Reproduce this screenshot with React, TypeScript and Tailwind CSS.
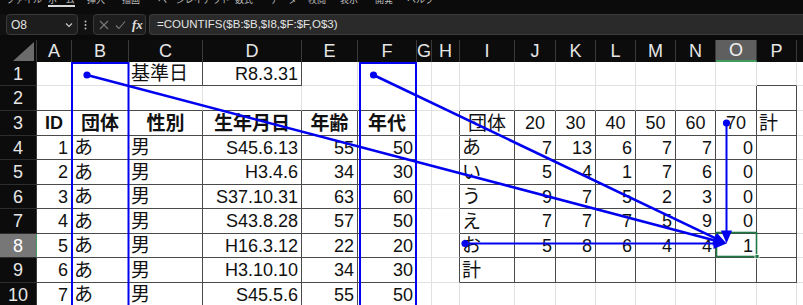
import React from "react";

type Align = "l" | "r" | "c";
type Cell = { t: string; a: Align; b?: boolean; j?: boolean };

const COLS = ["A","B","C","D","E","F","G","H","I","J","K","L","M","N","O","P","Q"];
const ROWS = [1,2,3,4,5,6,7,8,9,10];

const data: Record<string, Cell> = {};
const put = (ref: string, t: string, a: Align, b = false, j = false) => { data[ref] = { t, a, b, j }; };

put("C1", "基準日", "l", false, true);
put("D1", "R8.3.31", "r");
put("A3", "ID", "c", true);
put("B3", "団体", "c", true, true);
put("C3", "性別", "c", true, true);
put("D3", "生年月日", "c", true, true);
put("E3", "年齢", "c", true, true);
put("F3", "年代", "c", true, true);
put("I3", "団体", "c", false, true);
["20","30","40","50","60","70"].forEach((v, i) => put(COLS[9 + i] + "3", v, "c"));
put("P3", "計", "l", false, true);

const dates = ["S45.6.13","H3.4.6","S37.10.31","S43.8.28","H16.3.12","H3.10.10","S45.5.6"];
const ages = ["55","34","63","57","22","34","55"];
const decades = ["50","30","60","50","20","30","50"];
for (let i = 0; i < 7; i++) {
  const r = 4 + i;
  put("A" + r, String(i + 1), "r");
  put("B" + r, "あ", "l", false, true);
  put("C" + r, "男", "l", false, true);
  put("D" + r, dates[i], "r");
  put("E" + r, ages[i], "r");
  put("F" + r, decades[i], "r");
}
const groups = ["あ","い","う","え","お","計"];
groups.forEach((g, i) => put("I" + (4 + i), g, "l", false, true));
const counts = [
  ["7","13","6","7","7","0"],
  ["5","4","1","7","6","0"],
  ["9","7","5","2","3","0"],
  ["7","7","7","5","9","0"],
  ["5","8","6","4","4","1"],
];
counts.forEach((row, i) => row.forEach((v, j) => put(COLS[9 + j] + (4 + i), v, "r")));

function inTable(c: number, r: number): boolean {
  if (c >= 0 && c <= 5 && r >= 3 && r <= 11) return true;
  if ((c === 2 || c === 3) && r === 1) return true;
  if (c >= 8 && c <= 14 && r >= 3 && r <= 9) return true;
  if (c === 15 && r >= 2 && r <= 9) return true;
  return false;
}

const menu: [string, string][] = [
  ["ファイル", "w-[42px]"],
  ["ホーム", "w-[39px]"],
  ["挿入", "w-[35px]"],
  ["描画", "w-[36px]"],
  ["ページレイアウト", "w-[77px]"],
  ["数式", "w-[35px]"],
  ["データ", "w-[38px]"],
  ["校閲", "w-[32px]"],
  ["表示", "w-[35px]"],
  ["開発", "w-[32px]"],
  ["ヘルプ", "w-[40px]"],
];

function Arrows() {
  const tip = { x: 726.5, y: 243.5 };
  const arrows = [
    { x: 87, y: 75, w: 2.6 },
    { x: 373.5, y: 75, w: 2.6 },
    { x: 726.5, y: 123, w: 2 },
    { x: 465, y: 243.5, w: 2 },
  ];
  const blue = "#0000f0";
  return (
    <svg className="pointer-events-none absolute left-0 top-0" width={803} height={305} viewBox="0 0 803 305">
      <rect x={72} y={63} width={56.5} height={260} fill="none" stroke={blue} strokeWidth={2} />
      <rect x={360} y={63} width={56} height={260} fill="none" stroke={blue} strokeWidth={2} />
      <rect x={716.5} y={232.5} width={40} height={24} fill="none" stroke="#1f7a45" strokeWidth={1.6} />
      <rect x={755} y={254.5} width={4} height={4} fill="#1f7a45" stroke="#ffffff" strokeWidth={0.8} />
      {arrows.map((a, i) => {
        const dx = tip.x - a.x;
        const dy = tip.y - a.y;
        const len = Math.hypot(dx, dy);
        const ux = dx / len, uy = dy / len;
        const nx = -uy, ny = ux;
        const L = 13, W = 5.5;
        const bx = tip.x - L * ux, by = tip.y - L * uy;
        return (
          <g key={i}>
            <line x1={a.x} y1={a.y} x2={bx + ux} y2={by + uy} stroke={blue} strokeWidth={a.w} />
            <polygon
              points={`${tip.x},${tip.y} ${bx + W * nx},${by + W * ny} ${bx - W * nx},${by - W * ny}`}
              fill={blue}
            />
            <circle cx={a.x} cy={a.y} r={3.6} fill={blue} />
          </g>
        );
      })}
    </svg>
  );
}

export default function App() {
  return (
    <div className="relative h-[305px] w-[803px] overflow-hidden bg-[#0a0a0a] font-['Liberation_Sans','Noto_Sans_CJK_JP',sans-serif]">
      {/* menu bar (cut off at top) */}
      <div className="h-[14px] overflow-hidden bg-[#0b0b0b]">
        <div className="-mt-[5px] flex pl-[6px] font-['Noto_Sans_CJK_JP',sans-serif] text-[9px] leading-[9px] text-[#bdbdbd]">
          {menu.map(([m, w], i) => (
            <div key={m} className={`${w} shrink-0`}>
              <div className="inline-flex flex-col">
                <span className="whitespace-nowrap">{m}</span>
                {i === 1 ? <span className="mt-[1px] h-[2px] bg-[#d8d8d8]" /> : null}
              </div>
            </div>
          ))}
        </div>
      </div>
      {/* formula bar */}
      <div className="flex h-[21px] items-stretch bg-[#111111]">
        <div className="ml-[6px] flex w-[72px] items-center justify-between rounded-[4px] border border-[#3a3a3a] bg-[#1d1d1d] pl-[4px] pr-[4px]">
          <span className="text-[12px] text-[#e2e2e2]">O8</span>
          <svg width="8" height="6" viewBox="0 0 8 6"><path d="M1 1.5 L4 4.5 L7 1.5" fill="none" stroke="#c8c8c8" strokeWidth="1.2" /></svg>
        </div>
        <div className="flex w-[15px] items-center justify-center">
          <svg width="3" height="10" viewBox="0 0 3 10">
            <circle cx="1.5" cy="1.5" r="1" fill="#bdbdbd" />
            <circle cx="1.5" cy="5" r="1" fill="#bdbdbd" />
            <circle cx="1.5" cy="8.5" r="1" fill="#bdbdbd" />
          </svg>
        </div>
        <div className="flex w-[53px] items-center gap-[6px] rounded-[4px] border border-[#3a3a3a] bg-[#1d1d1d] pl-[5px]">
          <svg width="10" height="10" viewBox="0 0 10 10"><path d="M1 1 L9 9 M9 1 L1 9" stroke="#7a7a7a" strokeWidth="1.1" /></svg>
          <svg width="11" height="10" viewBox="0 0 11 10"><path d="M1 5.5 L4 8.5 L10 1.5" fill="none" stroke="#7a7a7a" strokeWidth="1.1" /></svg>
          <span className="font-['Liberation_Serif',serif] text-[13px] italic font-bold leading-none text-[#e0e0e0]">fx</span>
        </div>
        <div className="ml-[3px] flex flex-1 items-center rounded-l-[4px] border border-r-0 border-[#3c3c3c] bg-[#2a2a2a] pl-[7px]">
          <span className="text-[11.5px] text-[#e4e4e4]">=COUNTIFS($B:$B,$I8,$F:$F,O$3)</span>
        </div>
      </div>
      <div className="h-[5px] bg-[#0a0a0a]" />
      {/* sheet grid */}
      <div className="grid grid-cols-[37px_35px_57px_74px_99px_56px_59px_15px_28px_55px_41px_40px_40px_40px_40px_41px_40px_40px] grid-rows-[22px_24px_25px_25px_24px_25px_24px_25px_24px_25px_24px] text-[18px] leading-none">
        {/* corner */}
        <div className="flex items-end justify-end border-r border-r-[#3a3a3a] bg-[#0c0c0c] pb-[1px] pr-[2px]">
          <svg width="21" height="19" viewBox="0 0 21 19"><polygon points="21,0 21,19 0,19" fill="#6b6b6b" /></svg>
        </div>
        {COLS.map((c, ci) => (
          <div
            key={c}
            className={
              ci === 14
                ? "flex items-end justify-center border-r border-b-2 border-r-[#3a3a3a] border-b-[#3f9c5e] bg-[#5f5f5f] pb-[1px] text-[#f0f0f0]"
                : "flex items-end justify-center border-r border-r-[#3a3a3a] bg-[#0c0c0c] pb-[2px] text-[#e6e6e6]"
            }
          >
            {c}
          </div>
        ))}
        {ROWS.map((r) => (
          <React.Fragment key={r}>
            <div
              className={
                r === 8
                  ? "flex items-center justify-center border-b border-r border-b-[#2e2e2e] border-r-[#3f9c5e] bg-[#777777] text-[#ffffff]"
                  : "flex items-center justify-center border-b border-r border-b-[#2e2e2e] border-r-[#3a3a3a] bg-[#0c0c0c] text-[#e6e6e6]"
              }
            >
              {r}
            </div>
            {COLS.map((c, ci) => {
              const cell = data[c + r];
              const darkR = inTable(ci, r) || inTable(ci + 1, r);
              const darkB = inTable(ci, r) || inTable(ci, r + 1);
              const align = !cell
                ? ""
                : cell.a === "r"
                ? "justify-end pr-[3px]"
                : cell.a === "l"
                ? "justify-start pl-[2px]"
                : "justify-center";
              return (
                <div
                  key={c}
                  className={[
                    "flex items-center overflow-visible whitespace-nowrap border-r border-b bg-white text-[#111111]",
                    darkR ? "border-r-[#4a4a4a]" : "border-r-[#e1e1e1]",
                    darkB ? "border-b-[#4a4a4a]" : "border-b-[#e1e1e1]",
                    align,
                    cell && cell.b ? "font-bold" : "",
                    cell && cell.j ? "text-[19px]" : "",
                  ].join(" ")}
                >
                  {cell ? cell.t : ""}
                </div>
              );
            })}
          </React.Fragment>
        ))}
      </div>
      <Arrows />
    </div>
  );
}
